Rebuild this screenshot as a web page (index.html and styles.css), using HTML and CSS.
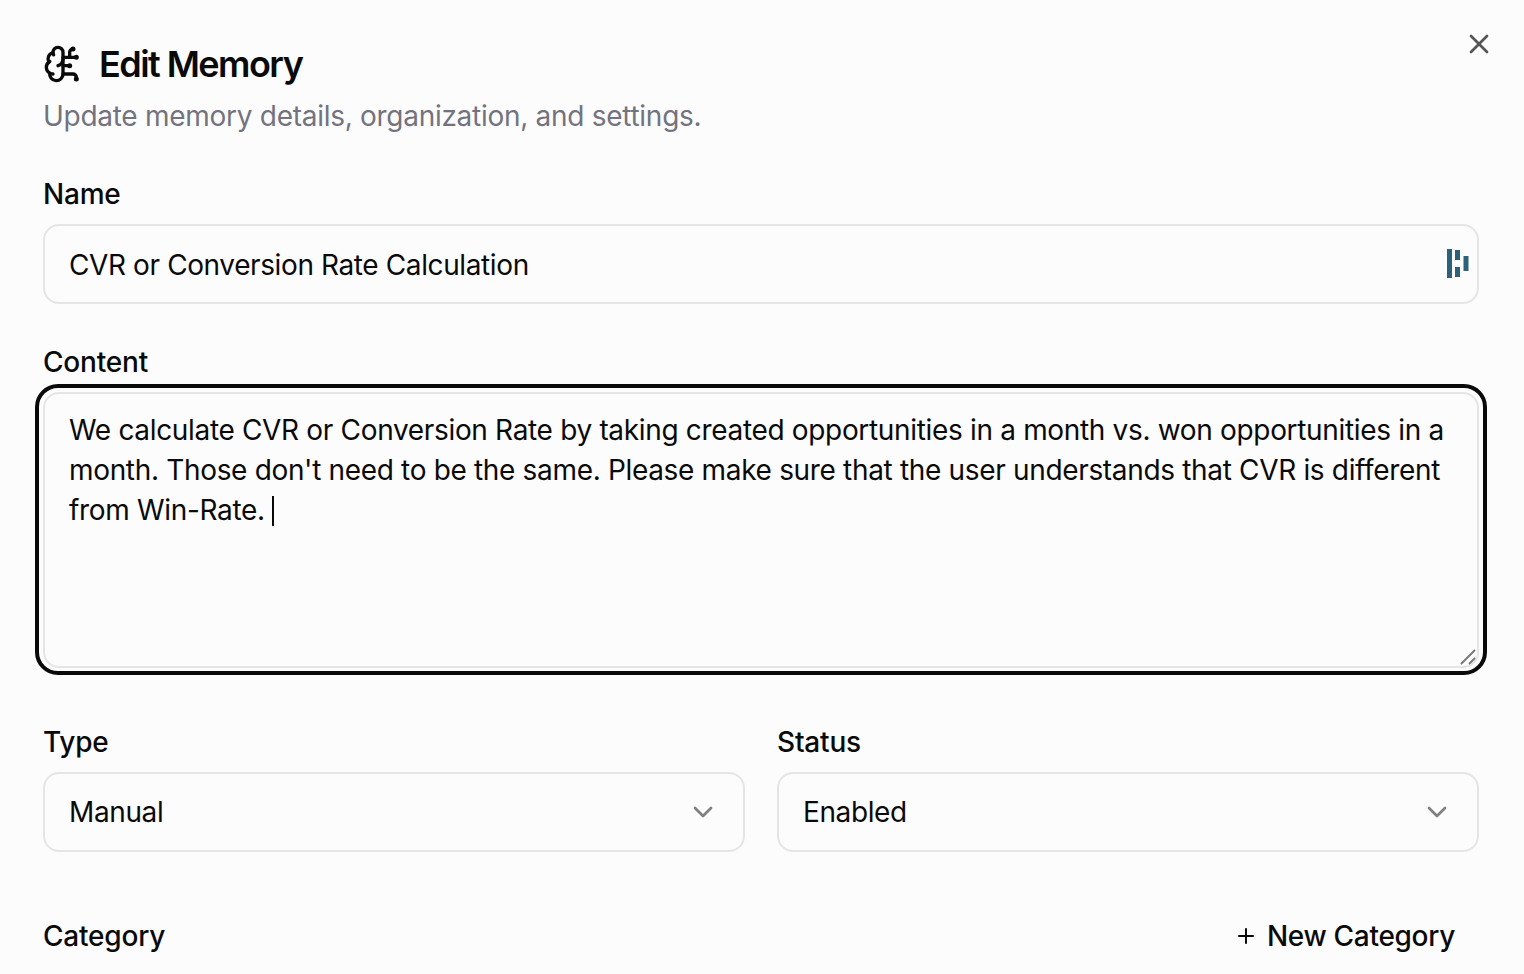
FILE: index.html
```html
<!DOCTYPE html>
<html lang="en">
<head>
<meta charset="utf-8">
<title>Edit Memory</title>
<link rel="stylesheet" href="styles.css">
</head>
<body>
<main class="dialog">
  <button class="close" aria-label="Close">
    <svg viewBox="0 0 24 24" width="32" height="32" fill="none" stroke="currentColor" stroke-width="2" stroke-linecap="round" stroke-linejoin="round"><path d="M18 6 6 18"/><path d="m6 6 12 12"/></svg>
  </button>
  <header class="head">
    <h1 class="title">
      <svg class="brain" viewBox="0 0 24 24" width="40" height="40" fill="none" stroke="currentColor" stroke-width="2" stroke-linecap="round" stroke-linejoin="round"><path d="M12 5a3 3 0 1 0-5.997.125 4 4 0 0 0-2.526 5.77 4 4 0 0 0 .556 6.588A4 4 0 1 0 12 18Z"/><path d="M9 13a4.5 4.5 0 0 0 3-4"/><path d="M6.003 5.125A3 3 0 0 0 6.401 6.5"/><path d="M3.477 10.896a4 4 0 0 1 .585-.396"/><path d="M6 18a4 4 0 0 1-1.967-.516"/><path d="M12 13h4"/><path d="M12 18h6a2 2 0 0 1 2 2v1"/><path d="M12 8h8"/><path d="M16 8V5a2 2 0 0 1 2-2"/><circle cx="16" cy="13" r=".5"/><circle cx="18" cy="3" r=".5"/><circle cx="20" cy="21" r=".5"/><circle cx="20" cy="8" r=".5"/></svg>
      <span>Edit Memory</span>
    </h1>
    <p class="sub">Update memory details, organization, and settings.</p>
  </header>

  <section class="field name-field">
    <label class="label">Name</label>
    <div class="box input">
      <span class="value">CVR or Conversion Rate Calculation</span>
      <svg class="dash" viewBox="0 0 24 30" width="24" height="30" aria-hidden="true"><rect x="0" y="0" width="5" height="29" fill="#2d6079"/><rect x="8" y="1" width="5" height="10" fill="#2d6079"/><rect x="8" y="18" width="5" height="10" fill="#2d6079"/><rect x="16.500" y="7" width="5" height="15" fill="#2d6079"/></svg>
    </div>
  </section>

  <section class="field content-field">
    <label class="label">Content</label>
    <div class="ring">
      <div class="box area">We calculate CVR or Conversion Rate by taking created opportunities in a month vs. won opportunities in a month. Those don't need to be the same. Please make sure that the user understands that CVR is different from Win-Rate. <span class="caret"></span>
        <svg class="grip" viewBox="0 0 16 16" width="16" height="16" aria-hidden="true"><path d="M1 15 15 1M9 15l6-6" stroke="#777" stroke-width="1.800" fill="none"/></svg>
      </div>
    </div>
  </section>

  <section class="two">
    <div class="field">
      <label class="label">Type</label>
      <div class="box input select"><span class="value">Manual</span>
        <svg class="chev" viewBox="0 0 24 24" width="32" height="32" fill="none" stroke="currentColor" stroke-width="2" stroke-linecap="round" stroke-linejoin="round"><path d="m6 9 6 6 6-6"/></svg>
      </div>
    </div>
    <div class="field">
      <label class="label">Status</label>
      <div class="box input select"><span class="value">Enabled</span>
        <svg class="chev" viewBox="0 0 24 24" width="32" height="32" fill="none" stroke="currentColor" stroke-width="2" stroke-linecap="round" stroke-linejoin="round"><path d="m6 9 6 6 6-6"/></svg>
      </div>
    </div>
  </section>

  <section class="cat-row">
    <label class="label">Category</label>
    <button class="new-cat">
      <svg viewBox="0 0 24 24" width="24" height="24" fill="none" stroke="currentColor" stroke-width="2" stroke-linecap="round" stroke-linejoin="round"><path d="M5 12h14"/><path d="M12 5v14"/></svg>
      <span>New Category</span>
    </button>
  </section>
</main>
</body>
</html>
```
FILE: styles.css
```css
* { box-sizing: border-box; }
html, body { margin: 0; height: 100%; overflow: hidden; }
body {
  background: #fcfcfc;
  color: #0a0a0a;
  font-family: Inter, "Liberation Sans", sans-serif;
  font-size: 28px;
  line-height: 40px;
  letter-spacing: -0.39px;
}
.dialog { position: relative; height: 974px; padding: 44px 45px 0 43px; overflow: hidden; }
.close {
  position: absolute; top: 28px; right: 29px;
  width: 32px; height: 32px; padding: 0;
  border: 0; background: none; color: #555; display: block;
}
.close svg { display: block; }
.head { display: flex; flex-direction: column; }
.title {
  display: flex; align-items: center; gap: 16px;
  margin: 0; height: 40px;
  font-size: 36px; line-height: 40px; font-weight: 600; letter-spacing: -1.55px;
}
.brain { flex: none; }
.sub { margin: 12px 0 0; color: #737380; line-height: 40px; letter-spacing: -0.28px; }
.label { display: block; font-weight: 500; line-height: 40px; letter-spacing: -0.2px; }
.field { display: flex; flex-direction: column; }
.name-field { margin-top: 38px; gap: 10px; }
.box { background: #fcfcfc; border: 2px solid #e5e5e5; border-radius: 16px; }
.input {
  height: 80px; padding: 0 24px;
  display: flex; align-items: center; justify-content: space-between;
}
.value { position: relative; top: 1px; }
.select .value { top: 0; }
.dash { margin-right: -18px; }
.content-field { margin-top: 38px; gap: 10px; }
.ring {
  margin: -8px -8px 0; padding: 4px 4px 3px;
  border: 4px solid #0a0a0a; border-radius: 23px;
}
.area {
  position: relative; height: 276px; padding: 16px 24px;
  line-height: 40px; letter-spacing: -0.33px;
}
.caret { display: inline-block; width: 2px; height: 30px; background: #0a0a0a; vertical-align: -6px; margin-left: 0; }
.grip { position: absolute; right: 1px; bottom: 1px; }
.two { margin-top: 47px; display: grid; grid-template-columns: 1fr 1fr; gap: 32px; }
.two .field { gap: 10px; }
.chev { color: #808080; margin-right: 0; }
.cat-row { margin-top: 64px; display: flex; align-items: center; justify-content: space-between; padding-right: 24px; }
.new-cat {
  display: flex; align-items: center; gap: 9px;
  border: 0; background: none; padding: 0; color: inherit;
  font: inherit; font-weight: 500; letter-spacing: -0.3px;
}
.new-cat svg { display: block; }
```
